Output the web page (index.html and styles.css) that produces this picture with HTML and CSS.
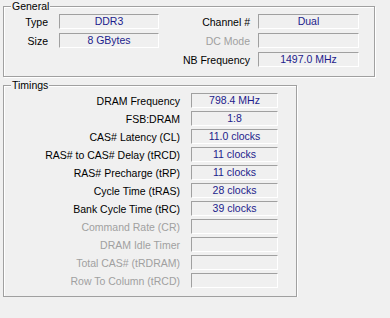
FILE: index.html
```html
<!DOCTYPE html>
<html>
  <head>
    <title>Memory</title>
    <link rel="stylesheet" href="styles.css">
  </head>
  <body>
    <fieldset class="group general">
      <legend>General</legend>
      <div class="generalCols">
        <div class="col colLeft">
          <div class="row">
            <span class="label">Type</span>
            <span class="field">DDR3</span>
          </div>
          <div class="row">
            <span class="label">Size</span>
            <span class="field">8 GBytes</span>
          </div>
        </div>
        <div class="col colRight">
          <div class="row">
            <span class="label">Channel #</span>
            <span class="field">Dual</span>
          </div>
          <div class="row">
            <span class="label disabled">DC Mode</span>
            <span class="field"></span>
          </div>
          <div class="row">
            <span class="label">NB Frequency</span>
            <span class="field">1497.0 MHz</span>
          </div>
        </div>
      </div>
    </fieldset>

    <fieldset class="group timings">
      <legend>Timings</legend>
      <div class="row">
        <span class="label">DRAM Frequency</span>
        <span class="field">798.4 MHz</span>
      </div>
      <div class="row">
        <span class="label">FSB:DRAM</span>
        <span class="field">1:8</span>
      </div>
      <div class="row">
        <span class="label">CAS# Latency (CL)</span>
        <span class="field">11.0 clocks</span>
      </div>
      <div class="row">
        <span class="label">RAS# to CAS# Delay (tRCD)</span>
        <span class="field">11 clocks</span>
      </div>
      <div class="row">
        <span class="label">RAS# Precharge (tRP)</span>
        <span class="field">11 clocks</span>
      </div>
      <div class="row">
        <span class="label">Cycle Time (tRAS)</span>
        <span class="field">28 clocks</span>
      </div>
      <div class="row">
        <span class="label">Bank Cycle Time (tRC)</span>
        <span class="field">39 clocks</span>
      </div>
      <div class="row">
        <span class="label disabled">Command Rate (CR)</span>
        <span class="field"></span>
      </div>
      <div class="row">
        <span class="label disabled">DRAM Idle Timer</span>
        <span class="field"></span>
      </div>
      <div class="row">
        <span class="label disabled">Total CAS# (tRDRAM)</span>
        <span class="field"></span>
      </div>
      <div class="row">
        <span class="label disabled">Row To Column (tRCD)</span>
        <span class="field"></span>
      </div>
    </fieldset>
  </body>
</html>
```

FILE: styles.css
```css
body {
  margin: 0;
  background: #f0f0f0;
  font-family: "Liberation Sans", Arial, sans-serif;
  font-size: 10.5px;
  color: #000;
}
.group {
  box-sizing: border-box;
  min-inline-size: 0;
  margin: 0 0 0 3px;
  padding: 1px 0 9px;
  border: 1px solid #a0a0a0;
  box-shadow: inset 1px 1px 0 #fff, 1px 1px 0 #fff;
}
.group legend {
  margin-left: 7px;
  padding: 0 1px;
  line-height: 13px;
  background: #f0f0f0;
}
.row {
  display: flex;
  align-items: center;
  height: 15px;
}
.label {
  text-align: right;
  white-space: nowrap;
}
.disabled {
  color: #a0a0a0;
}
.field {
  box-sizing: border-box;
  height: 15px;
  line-height: 13px;
  border-top: 1px solid #a0a0a0;
  border-left: 1px solid #a0a0a0;
  border-right: 1px solid #fff;
  border-bottom: 1px solid #fff;
  color: #1c1c8c;
  text-align: center;
  white-space: nowrap;
}

/* general */
.general {
  width: 372px;
}
.generalCols {
  display: flex;
}
.col .row + .row {
  margin-top: 4px;
}
.colLeft .label {
  width: 44px;
  margin-right: 11px;
}
.colLeft .field {
  width: 100px;
}
.colRight .label {
  width: 91px;
  margin-right: 8px;
}
.colRight .field {
  width: 101px;
}

/* timings */
.timings {
  width: 294px;
  margin-top: 2px;
  padding-bottom: 8px;
}
.timings .row + .row {
  margin-top: 3px;
}
.timings .label {
  width: 176px;
  margin-right: 11px;
}
.timings .field {
  width: 87px;
}
```
